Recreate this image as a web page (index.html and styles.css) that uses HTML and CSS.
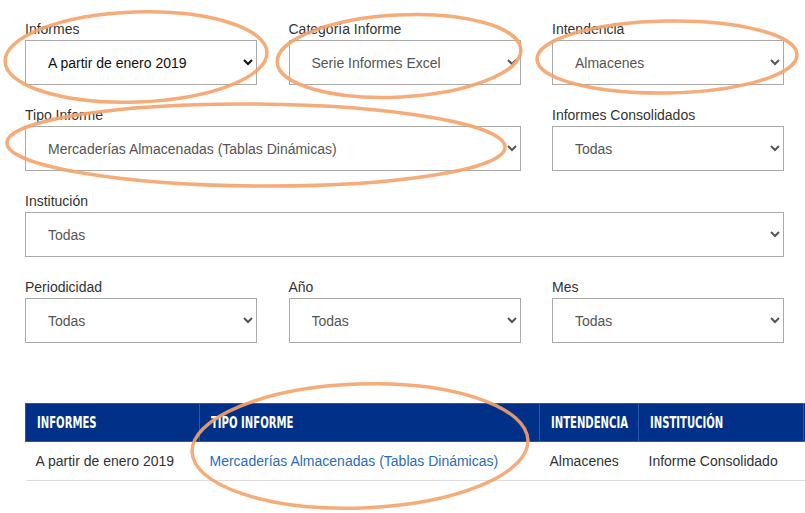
FILE: index.html
```html
<!DOCTYPE html>
<html lang="es">
<head>
<meta charset="UTF-8">
<meta name="viewport" content="width=device-width, initial-scale=1.0">
<title>Informes</title>
<link rel="stylesheet" href="styles.css">
</head>
<body>

<div class="page">
  <form class="filters">
    <div class="field">
      <label>Informes</label>
      <select class="dark"><option>A partir de enero 2019</option></select>
    </div>
    <div class="field">
      <label>Categoría Informe</label>
      <select><option>Serie Informes Excel</option></select>
    </div>
    <div class="field">
      <label>Intendencia</label>
      <select><option>Almacenes</option></select>
    </div>
    <div class="field span-2">
      <label>Tipo Informe</label>
      <select><option>Mercaderías Almacenadas (Tablas Dinámicas)</option></select>
    </div>
    <div class="field">
      <label>Informes Consolidados</label>
      <select><option>Todas</option></select>
    </div>
    <div class="field span-3">
      <label>Institución</label>
      <select><option>Todas</option></select>
    </div>
    <div class="field">
      <label>Periodicidad</label>
      <select><option>Todas</option></select>
    </div>
    <div class="field">
      <label>Año</label>
      <select><option>Todas</option></select>
    </div>
    <div class="field">
      <label>Mes</label>
      <select><option>Todas</option></select>
    </div>
  </form>

  <table class="results">
    <thead>
      <tr>
        <th class="col-informes"><span>Informes</span></th>
        <th class="col-tipo"><span>Tipo Informe</span></th>
        <th class="col-intendencia"><span>Intendencia</span></th>
        <th class="col-institucion"><span>Institución</span></th>
        <th class="col-extra"></th>
      </tr>
    </thead>
    <tbody>
      <tr>
        <td>A partir de enero 2019</td>
        <td><a href="#">Mercaderías Almacenadas (Tablas Dinámicas)</a></td>
        <td>Almacenes</td>
        <td>Informe Consolidado</td>
        <td></td>
      </tr>
    </tbody>
  </table>
</div>

<!-- hand-drawn highlight marks -->
<svg class="marks" width="805" height="513" viewBox="0 0 805 513">
  <ellipse cx="136" cy="57" rx="131" ry="45" transform="rotate(-2 136 57)"/>
  <ellipse cx="399" cy="56" rx="122" ry="41" transform="rotate(-3 399 56)"/>
  <ellipse cx="667" cy="57" rx="130" ry="36" transform="rotate(-1 667 57)"/>
  <ellipse cx="256" cy="145" rx="249" ry="41" transform="rotate(0.5 256 145)"/>
  <ellipse cx="360" cy="446" rx="168" ry="62" transform="rotate(-2 360 446)"/>
</svg>

</body>
</html>
```

FILE: styles.css
```css
/* page styles for report filters */
html {
  overflow: hidden;
}
body {
  margin: 0;
  font-family: "Liberation Sans", Arial, sans-serif;
  color: #333;
  background: #fff;
}
.page {
  padding: 21px 0 0 25px;
}
.filters {
  display: grid;
  grid-template-columns: repeat(3, 232px);
  column-gap: 31.5px;
  row-gap: 22px;
}
.span-2 {
  grid-column: span 2;
}
.span-3 {
  grid-column: span 3;
}
.field label {
  display: block;
  font-size: 14px;
  line-height: 16px;
  margin-bottom: 3px;
  color: #333;
}
.field select {
  width: 100%;
  height: 45px;
  padding: 0 6px 0 18px;
  font-family: inherit;
  font-size: 14px;
  color: #555;
  background-color: #fff;
  border: 1px solid #aaa;
  border-radius: 0;
}
.field select.dark {
  color: #111;
}
.results {
  margin-top: 60px;
  width: 900px;
  border-collapse: collapse;
  table-layout: fixed;
}
.results th {
  height: 38px;
  padding: 0 11px;
  text-align: left;
  text-transform: uppercase;
  font-family: "DejaVu Sans Condensed", "DejaVu Sans", sans-serif;
  font-size: 16px;
  font-weight: bold;
  color: #fff;
  background-color: #003087;
  border: 1px solid #2c5aa8;
  box-sizing: border-box;
  white-space: nowrap;
}
/* condensed header lettering */
.results th span {
  display: inline-block;
  transform: scaleX(0.7);
  transform-origin: left center;
}
.col-informes { width: 174px; }
.col-tipo { width: 340px; }
.col-intendencia { width: 99px; }
.col-institucion { width: 165px; }
.col-extra { width: 122px; }
.results td {
  height: 38px;
  padding: 0 10px;
  font-size: 14px;
  color: #333;
  border-bottom: 1px solid #ddd;
}
.results td a {
  color: #2a6ebb;
  text-decoration: none;
}
.marks {
  position: absolute;
  top: 0;
  left: 0;
  pointer-events: none;
}
.marks ellipse {
  fill: none;
  stroke: #f5a36a;
  stroke-width: 3.5;
  opacity: 0.9;
}
```
